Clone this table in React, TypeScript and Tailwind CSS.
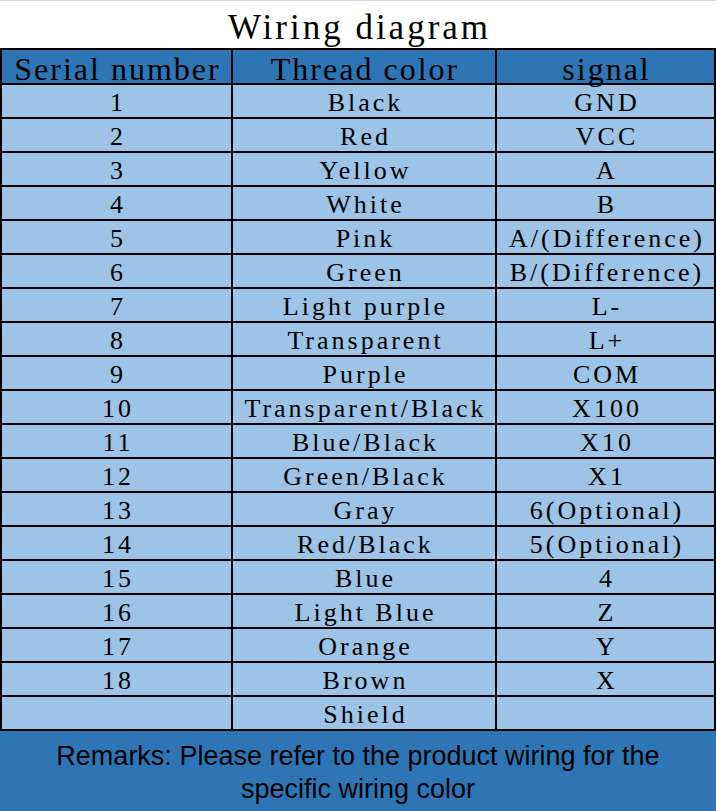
import React from "react";

const rows: [string, string, string][] = [
  ["1", "Black", "GND"],
  ["2", "Red", "VCC"],
  ["3", "Yellow", "A"],
  ["4", "White", "B"],
  ["5", "Pink", "A/(Difference)"],
  ["6", "Green", "B/(Difference)"],
  ["7", "Light purple", "L-"],
  ["8", "Transparent", "L+"],
  ["9", "Purple", "COM"],
  ["10", "Transparent/Black", "X100"],
  ["11", "Blue/Black", "X10"],
  ["12", "Green/Black", "X1"],
  ["13", "Gray", "6(Optional)"],
  ["14", "Red/Black", "5(Optional)"],
  ["15", "Blue", "4"],
  ["16", "Light Blue", "Z"],
  ["17", "Orange", "Y"],
  ["18", "Brown", "X"],
  ["", "Shield", ""],
];

const serif = { fontFamily: '"Liberation Serif", "Times New Roman", serif' };

function Cell({ children, last }: { children: React.ReactNode; last?: boolean }) {
  return (
    <div
      className={`flex items-center justify-center whitespace-nowrap ${
        last ? "" : "border-r-2 border-black"
      }`}
    >
      <span className="inline-block text-[26px] leading-none tracking-[3px] pl-[3px] pt-[4px]" style={serif}>
        {children}
      </span>
    </div>
  );
}

export default function App() {
  return (
    <div className="w-[716px] h-[811px] bg-white overflow-hidden text-black">
      <div className="h-[48px] border-t border-[#d4d6e0] flex items-center justify-center">
        <span className="inline-block text-[35px] leading-none tracking-[3px] pl-[3px] pt-[5px]" style={serif}>
          Wiring diagram
        </span>
      </div>
      <div className="border-l-2 border-r-2 border-black">
        <div className="grid grid-cols-[231px_264px_217px] h-[37px] bg-[#2e75b6] border-t-2 border-b-2 border-black">
          {["Serial number", "Thread color", "signal"].map((t, i) => (
            <div
              key={t}
              className={`flex items-center justify-center whitespace-nowrap ${
                i < 2 ? "border-r-2 border-black" : ""
              }`}
            >
              <span className="inline-block text-[32px] leading-none tracking-[2px] pl-[2px] pt-[3px]" style={serif}>
                {t}
              </span>
            </div>
          ))}
        </div>
        {rows.map((r, i) => (
          <div
            key={i}
            className="grid grid-cols-[231px_264px_217px] h-[34px] bg-[#9dc3e6] border-b-2 border-black"
          >
            <Cell>{r[0]}</Cell>
            <Cell>{r[1]}</Cell>
            <Cell last>{r[2]}</Cell>
          </div>
        ))}
      </div>
      <div className="h-[80px] bg-[#2e75b6] flex flex-col items-center justify-center pt-[4px]">
        {["Remarks: Please refer to the product wiring for the", "specific wiring color"].map((l) => (
          <div key={l} className="h-[33px] flex items-center justify-center whitespace-nowrap">
            <span
              className="inline-block text-[27px] leading-none"
              style={{ fontFamily: '"Liberation Sans", Arial, sans-serif' }}
            >
              {l}
            </span>
          </div>
        ))}
      </div>
    </div>
  );
}
